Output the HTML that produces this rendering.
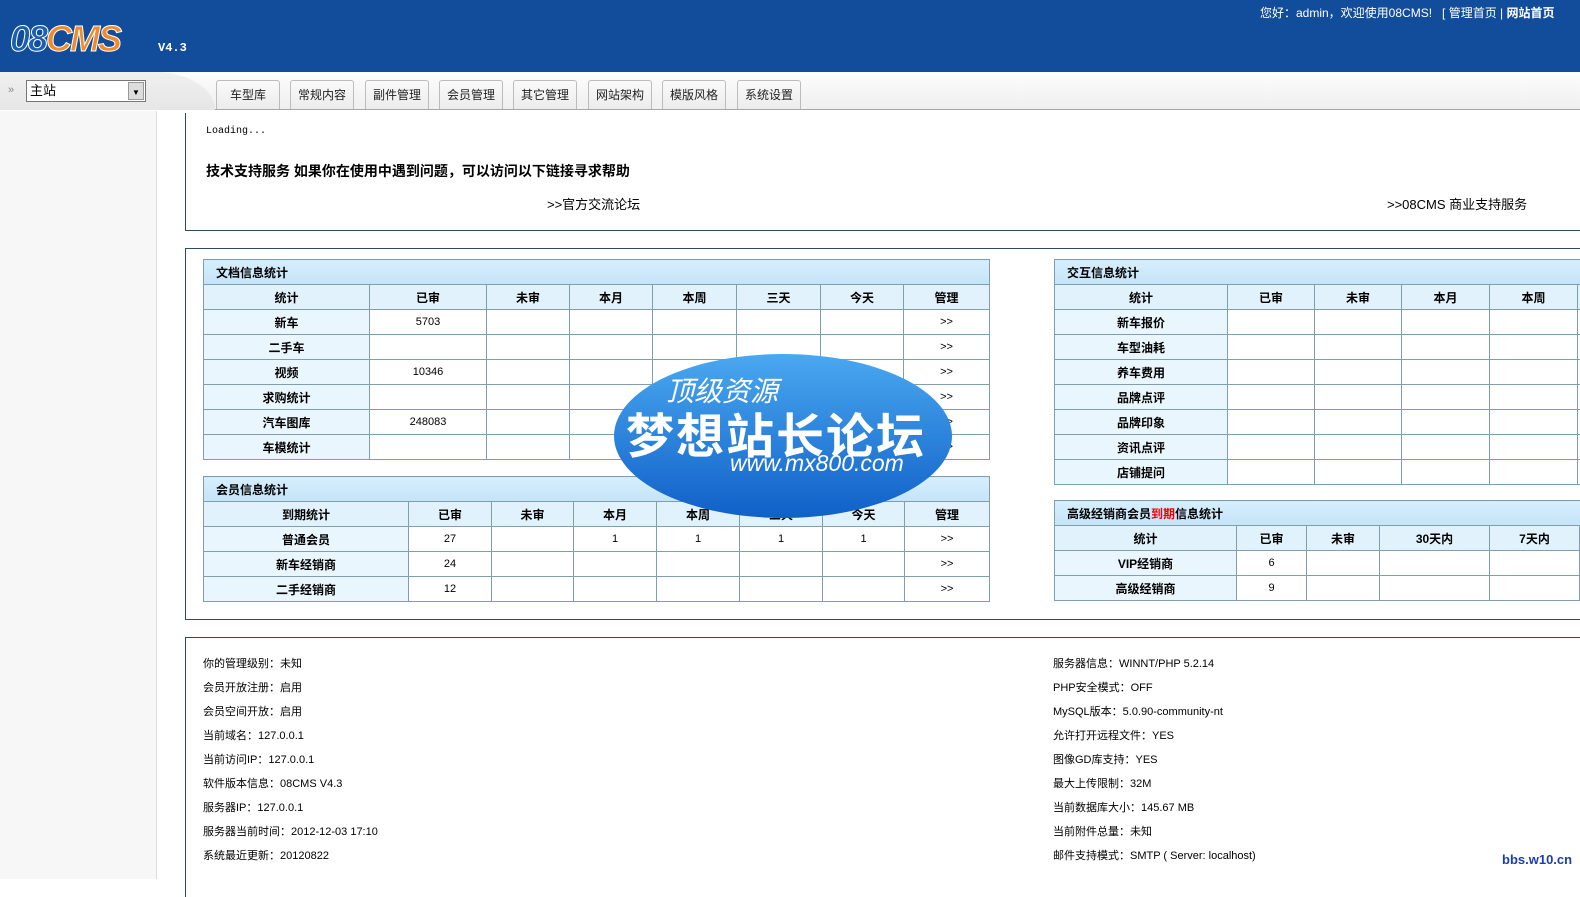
<!DOCTYPE html>
<html><head><meta charset="utf-8"><style>
*{margin:0;padding:0;box-sizing:border-box}
body{width:1580px;height:879px;overflow:hidden;background:#fff;font-family:"Liberation Sans","Noto Sans CJK SC",sans-serif;font-size:12px;color:#000;position:relative}
.abs{position:absolute}
#top{left:0;top:0;width:1580px;height:72px;background:#124d9c}
#nav{left:0;top:72px;width:1580px;height:38px;background:linear-gradient(#fdfdfd,#efefef);border-bottom:1px solid #a8a8a8}
#side{left:0;top:111px;width:157px;height:768px;background:#f7f7f7;border-right:1px solid #ddd}
.tab{position:absolute;top:80px;height:29px;border:1px solid #bcbcbc;border-bottom:none;border-radius:3px 3px 0 0;background:linear-gradient(#fafafa,#ececec);font-size:12px;line-height:28px;text-align:center;color:#222}
.box{position:absolute;left:185px;width:1400px;border:1px solid #2e4a6a;border-right:none}
table{position:absolute;border-collapse:collapse;table-layout:fixed}
td{border:1px solid #7f9fae;height:25px;text-align:center;font-size:11px;padding:0}
td.t{background:linear-gradient(#d6eefc,#c4e4f8);text-align:left;padding-left:12px;font-weight:bold;font-size:12px}
tr.h td{background:#e2f2fc;font-weight:bold;font-size:12px}
td.l{background:#eaf6fd;font-weight:bold;font-size:12px}
.info{position:absolute;font-size:11px;line-height:24px}
</style></head><body>
<div id="top" class="abs"></div>
<div class="abs" style="left:10px;top:18px;font:italic bold 36px 'Liberation Sans',sans-serif;letter-spacing:-2px;color:#f08a2a;-webkit-text-stroke:1px #fff"><span style="color:#1a5fb0">08</span>CMS</div>
<div class="abs" style="left:158px;top:41px;color:#fff;font:bold 12px 'Liberation Mono',monospace">V4.3</div>
<div class="abs" style="left:1260px;top:4px;color:#fff;font-size:12px;white-space:nowrap">您好：admin，欢迎使用08CMS!&nbsp;&nbsp;&nbsp;[ 管理首页 | <b>网站首页</b></div>
<div id="nav" class="abs"></div>
<div class="abs" style="left:0;top:72px;width:215px;height:38px;background:linear-gradient(#f0f0f0,#e6e6e6);border-top-right-radius:60px 38px"></div>
<div class="abs" style="left:8px;top:84px;color:#888;font-size:11px">»</div>
<div class="abs" style="left:26px;top:80px;width:120px;height:22px;border:1px solid #777;background:#fff;font-size:13px;line-height:20px;padding-left:3px">主站<span style="position:absolute;right:1px;top:1px;width:16px;height:18px;background:#ddd;border:1px solid #999;font-size:8px;text-align:center">▼</span></div>
<div class="tab" style="left:216px;width:64px">车型库</div>
<div class="tab" style="left:290px;width:64px">常规内容</div>
<div class="tab" style="left:365px;width:64px">副件管理</div>
<div class="tab" style="left:439px;width:64px">会员管理</div>
<div class="tab" style="left:513px;width:64px">其它管理</div>
<div class="tab" style="left:588px;width:64px">网站架构</div>
<div class="tab" style="left:662px;width:64px">模版风格</div>
<div class="tab" style="left:737px;width:64px">系统设置</div>
<div id="side" class="abs"></div>

<div class="box" style="top:113px;height:118px;border-top:none"></div>
<div class="abs" style="left:206px;top:126px;font:10px 'Liberation Mono',monospace">Loading...</div>
<div class="abs" style="left:206px;top:161px;font-weight:bold;font-size:14px">技术支持服务 如果你在使用中遇到问题，可以访问以下链接寻求帮助</div>
<div class="abs" style="left:547px;top:194px;font-size:13px">&gt;&gt;官方交流论坛</div>
<div class="abs" style="left:1387px;top:194px;font-size:13px">&gt;&gt;08CMS 商业支持服务</div>

<div class="box" style="top:248px;height:372px"></div>
<table style="left:203px;top:259px;width:786px">
<col style="width:166px"><col style="width:117px"><col style="width:83px"><col style="width:83px"><col style="width:84px"><col style="width:84px"><col style="width:83px"><col style="width:86px">
<tr><td class="t" colspan="8">文档信息统计</td></tr>
<tr class="h"><td>统计</td><td>已审</td><td>未审</td><td>本月</td><td>本周</td><td>三天</td><td>今天</td><td>管理</td></tr>
<tr><td class="l">新车</td><td>5703</td><td></td><td></td><td></td><td></td><td></td><td>&gt;&gt;</td></tr>
<tr><td class="l">二手车</td><td></td><td></td><td></td><td></td><td></td><td></td><td>&gt;&gt;</td></tr>
<tr><td class="l">视频</td><td>10346</td><td></td><td></td><td></td><td></td><td></td><td>&gt;&gt;</td></tr>
<tr><td class="l">求购统计</td><td></td><td></td><td></td><td></td><td></td><td></td><td>&gt;&gt;</td></tr>
<tr><td class="l">汽车图库</td><td>248083</td><td></td><td></td><td></td><td></td><td></td><td>&gt;&gt;</td></tr>
<tr><td class="l">车模统计</td><td></td><td></td><td></td><td></td><td></td><td></td><td>&gt;&gt;</td></tr>
</table>
<table style="left:203px;top:476px;width:786px">
<col style="width:205px"><col style="width:83px"><col style="width:82px"><col style="width:83px"><col style="width:83px"><col style="width:83px"><col style="width:82px"><col style="width:85px">
<tr><td class="t" colspan="8">会员信息统计</td></tr>
<tr class="h"><td>到期统计</td><td>已审</td><td>未审</td><td>本月</td><td>本周</td><td>三天</td><td>今天</td><td>管理</td></tr>
<tr><td class="l">普通会员</td><td>27</td><td></td><td>1</td><td>1</td><td>1</td><td>1</td><td>&gt;&gt;</td></tr>
<tr><td class="l">新车经销商</td><td>24</td><td></td><td></td><td></td><td></td><td></td><td>&gt;&gt;</td></tr>
<tr><td class="l">二手经销商</td><td>12</td><td></td><td></td><td></td><td></td><td></td><td>&gt;&gt;</td></tr>
</table>
<table style="left:1054px;top:259px;width:610px">
<col style="width:173px"><col style="width:87px"><col style="width:87px"><col style="width:88px"><col style="width:88px"><col style="width:87px">
<tr><td class="t" colspan="6">交互信息统计</td></tr>
<tr class="h"><td>统计</td><td>已审</td><td>未审</td><td>本月</td><td>本周</td><td>三天</td></tr>
<tr><td class="l">新车报价</td><td></td><td></td><td></td><td></td><td></td></tr>
<tr><td class="l">车型油耗</td><td></td><td></td><td></td><td></td><td></td></tr>
<tr><td class="l">养车费用</td><td></td><td></td><td></td><td></td><td></td></tr>
<tr><td class="l">品牌点评</td><td></td><td></td><td></td><td></td><td></td></tr>
<tr><td class="l">品牌印象</td><td></td><td></td><td></td><td></td><td></td></tr>
<tr><td class="l">资讯点评</td><td></td><td></td><td></td><td></td><td></td></tr>
<tr><td class="l">店铺提问</td><td></td><td></td><td></td><td></td><td></td></tr>
</table>
<table style="left:1054px;top:500px;width:620px">
<col style="width:182px"><col style="width:70px"><col style="width:73px"><col style="width:110px"><col style="width:90px"><col style="width:95px">
<tr><td class="t" colspan="6">高级经销商会员<span style="color:#e00">到期</span>信息统计</td></tr>
<tr class="h"><td>统计</td><td>已审</td><td>未审</td><td>30天内</td><td>7天内</td><td></td></tr>
<tr><td class="l">VIP经销商</td><td>6</td><td></td><td></td><td></td><td></td></tr>
<tr><td class="l">高级经销商</td><td>9</td><td></td><td></td><td></td><td></td></tr>
</table>

<svg class="abs" style="left:612px;top:352px" width="342" height="168"><defs><linearGradient id="g" x1="0" y1="0" x2="0" y2="1"><stop offset="0" stop-color="#4aa8f0"/><stop offset="1" stop-color="#1060c8"/></linearGradient></defs><ellipse cx="171" cy="84" rx="169" ry="82" fill="url(#g)"/></svg>
<div class="abs" style="left:666px;top:370px;color:#fff;font-size:28px;font-style:italic;font-family:'Noto Sans CJK SC',sans-serif">顶级资源</div>
<div class="abs" style="left:626px;top:402px;color:#fff;font-size:48px;font-weight:bold;letter-spacing:2px;line-height:60px;font-family:'Noto Sans CJK SC',sans-serif">梦想站长论坛</div>
<div class="abs" style="left:730px;top:450px;color:#fff;font-size:23px;font-style:italic">www.mx800.com</div>

<div class="box" style="top:637px;height:260px;border-bottom:none"></div>
<div class="info" style="left:203px;top:652px">你的管理级别：未知<br>会员开放注册：启用<br>会员空间开放：启用<br>当前域名：127.0.0.1<br>当前访问IP：127.0.0.1<br>软件版本信息：08CMS V4.3<br>服务器IP：127.0.0.1<br>服务器当前时间：2012-12-03 17:10<br>系统最近更新：20120822</div>
<div class="info" style="left:1053px;top:652px">服务器信息：WINNT/PHP 5.2.14<br>PHP安全模式：OFF<br>MySQL版本：5.0.90-community-nt<br>允许打开远程文件：YES<br>图像GD库支持：YES<br>最大上传限制：32M<br>当前数据库大小：145.67 MB<br>当前附件总量：未知<br>邮件支持模式：SMTP ( Server: localhost)</div>
<div class="abs" style="left:1502px;top:852px;color:#1a3fb0;font-weight:bold;font-size:13px">bbs.w10.cn</div>
</body></html>
